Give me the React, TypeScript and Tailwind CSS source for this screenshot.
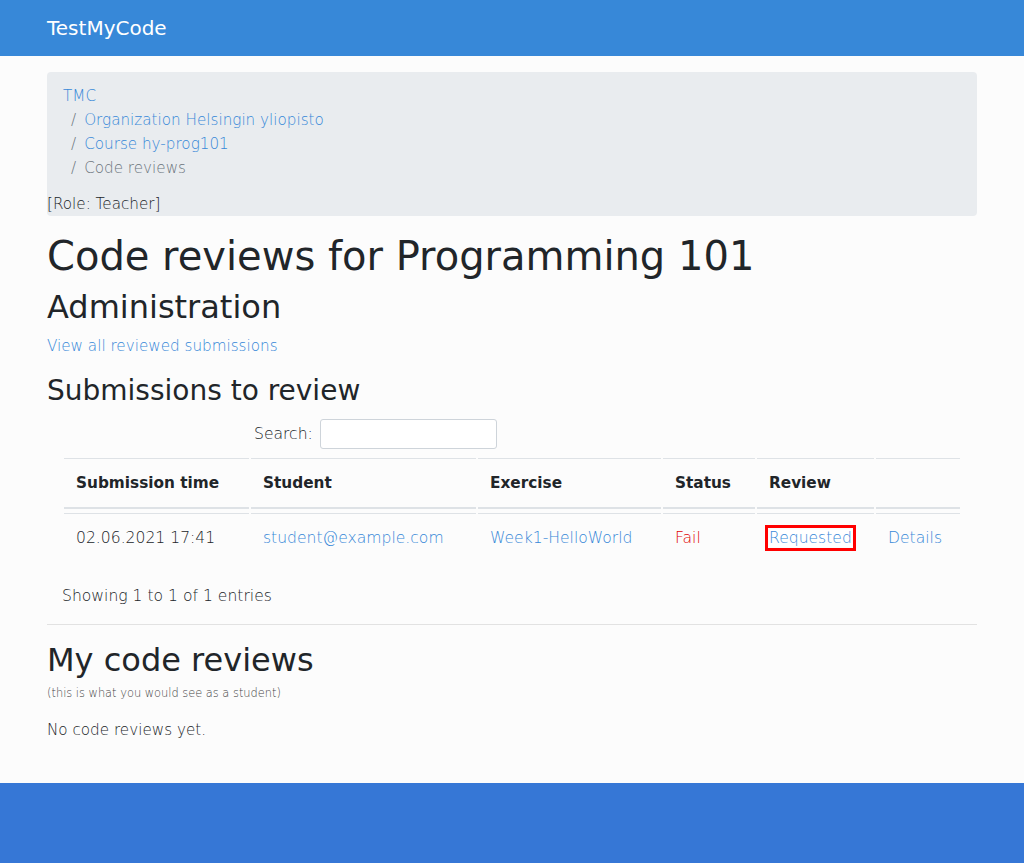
import React from 'react'

const font = { fontFamily: '"DejaVu Sans", Verdana, sans-serif' }

export default function App() {
  return (
    <div className="min-h-screen bg-[#fcfcfc] text-[#212529] text-[15.2px] leading-6 font-light" style={font}>
      {/* Navbar */}
      <nav className="h-14 bg-[#3788d8]">
        <div className="mx-auto flex h-full w-[960px] items-center px-[15px]">
          <a href="#" className="text-[20px] leading-[30px] font-normal text-white">TestMyCode</a>
        </div>
      </nav>

      <main className="mx-auto w-[960px] px-[15px] pt-4">
        {/* Breadcrumb */}
        <div className="mb-4 rounded bg-[#e9ecef]">
          <ol className="px-4 py-3">
            <li><a href="#" className="text-[#3788d8]">TMC</a></li>
            <li><span className="px-2 text-[#6c757d]">/</span><a href="#" className="text-[#3788d8]">Organization Helsingin yliopisto</a></li>
            <li><span className="px-2 text-[#6c757d]">/</span><a href="#" className="text-[#3788d8]">Course hy-prog101</a></li>
            <li className="text-[#6c757d]"><span className="px-2">/</span>Code reviews</li>
          </ol>
          <div>[Role: Teacher]</div>
        </div>

        <h1 className="mb-2 text-[40px] leading-[48px] font-normal">Code reviews for Programming 101</h1>
        <h2 className="mb-2 text-[32px] leading-[38px] font-normal">Administration</h2>
        <p className="mb-4"><a href="#" className="text-[#3788d8]">View all reviewed submissions</a></p>

        <h3 className="mb-2 text-[28px] leading-[34px] font-normal">Submissions to review</h3>

        {/* DataTables wrapper */}
        <div className="px-[15px] pt-[3px] text-[15.6px]">
          <div className="mb-[5px] flex items-center pl-[192px]">
            <label className="mr-[7px]">Search:</label>
            <input type="search" className="h-[30px] w-[177px] rounded-[3px] border border-[#ced4da] bg-white" />
          </div>

          <table className="w-[900px] border-separate border-spacing-x-[2px] border-spacing-y-[4px] text-left">
            <thead className="text-[15.3px]">
              <tr>
                <th className="w-[185px] border-t border-b-2 border-[#dee2e6] p-3 font-bold">Submission time</th>
                <th className="w-[225px] border-t border-b-2 border-[#dee2e6] p-3 font-bold">Student</th>
                <th className="w-[183px] border-t border-b-2 border-[#dee2e6] p-3 font-bold">Exercise</th>
                <th className="w-[92px] border-t border-b-2 border-[#dee2e6] p-3 font-bold">Status</th>
                <th className="w-[117px] border-t border-b-2 border-[#dee2e6] p-3 font-bold">Review</th>
                <th className="w-[84px] border-t border-b-2 border-[#dee2e6] p-3"></th>
              </tr>
            </thead>
            <tbody>
              <tr>
                <td className="border-t border-[#dee2e6] p-3">02.06.2021 17:41</td>
                <td className="border-t border-[#dee2e6] p-3"><a href="#" className="text-[#3788d8]">student@example.com</a></td>
                <td className="border-t border-[#dee2e6] p-3"><a href="#" className="text-[#3788d8]">Week1-HelloWorld</a></td>
                <td className="border-t border-[#dee2e6] p-3 text-[#e00000]">Fail</td>
                <td className="border-t border-[#dee2e6] p-3">
                  <a href="#" className="bg-white text-[#3788d8] outline-3 outline-[#ff0000] outline-offset-1">Requested</a>
                </td>
                <td className="border-t border-[#dee2e6] p-3"><a href="#" className="text-[#3788d8]">Details</a></td>
              </tr>
            </tbody>
          </table>

          <div className="mt-[18px]">Showing 1 to 1 of 1 entries</div>
        </div>

        <hr className="mt-4 mb-4 border-t border-[#e2e2e2]" />

        <h2 className="mb-2 text-[32px] leading-[38px] font-normal">My code reviews</h2>
        <p className="mb-[19px] text-[11.4px] leading-[12px] text-[#444]">(this is what you would see as a student)</p>
        <p>No code reviews yet.</p>
      </main>

      <footer className="mt-[41px] h-20 bg-[#3677d6]" />
    </div>
  )
}
